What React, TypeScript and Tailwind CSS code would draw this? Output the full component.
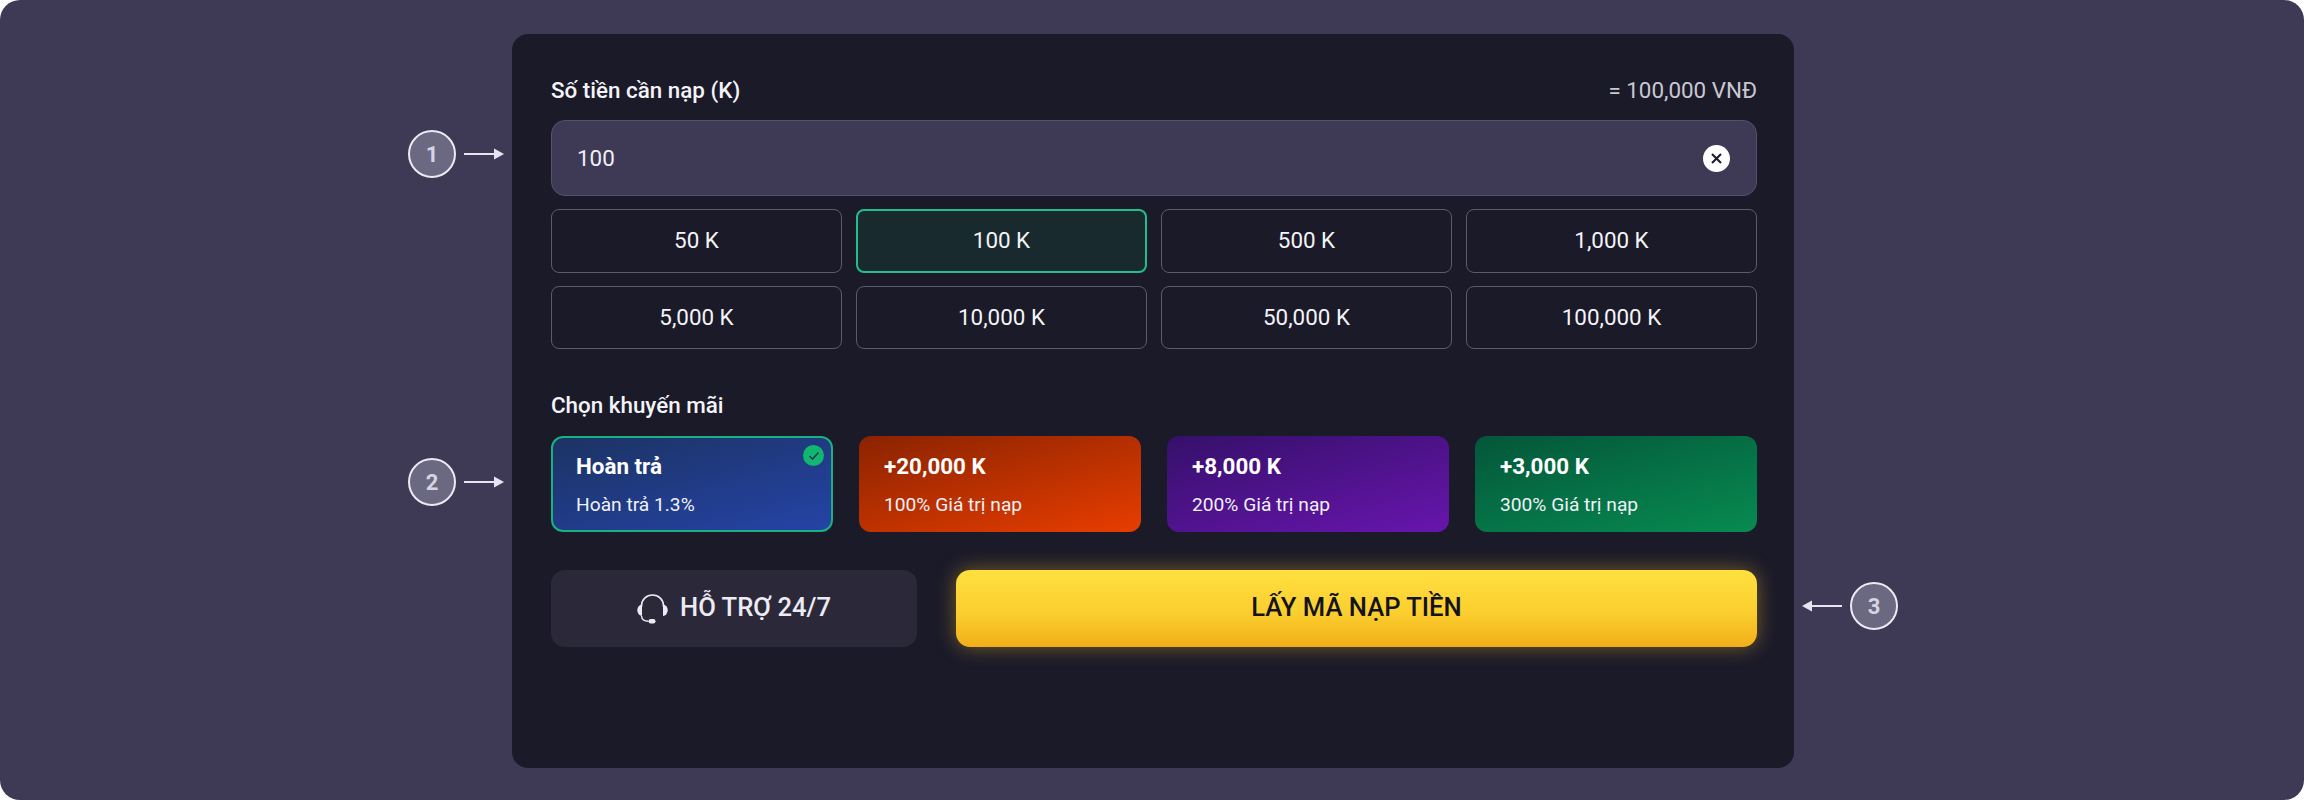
const amounts = ["50 K", "100 K", "500 K", "1,000 K", "5,000 K", "10,000 K", "50,000 K", "100,000 K"];

const promos = [
  { title: "Hoàn trả", sub: "Hoàn trả 1.3%", bg: "bg-[linear-gradient(165deg,#1c3363_0%,#2543a6_100%)]", active: true },
  { title: "+20,000 K", sub: "100% Giá trị nạp", bg: "bg-[linear-gradient(165deg,#8a2300_0%,#e83d00_100%)]", active: false },
  { title: "+8,000 K", sub: "200% Giá trị nạp", bg: "bg-[linear-gradient(165deg,#35106a_0%,#6815ad_100%)]", active: false },
  { title: "+3,000 K", sub: "300% Giá trị nạp", bg: "bg-[linear-gradient(165deg,#04563a_0%,#078b50_100%)]", active: false },
];

function Arrow({ flip }: { flip?: boolean }) {
  return (
    <svg width="40" height="12" viewBox="0 0 40 12" className={flip ? "rotate-180" : ""}>
      <path d="M0 6h32" stroke="#e6e4f0" strokeWidth="2" />
      <path d="M30 0.5 40 6l-10 5.5z" fill="#e6e4f0" />
    </svg>
  );
}

function Badge({ n }: { n: number }) {
  return (
    <div className="flex h-[48px] w-[48px] items-center justify-center rounded-full border-2 border-[#ebeaf2] bg-[#6b6881] text-[22px] font-bold text-[#d6d4e2]">
      {n}
    </div>
  );
}

function Headset() {
  return (
    <svg width="31" height="30" viewBox="0 0 31 30" fill="none">
      <path d="M4.5 13V11.5a11 10.5 0 0 1 22 0V13" stroke="#ecebf3" strokeWidth="1.6" />
      <path d="M5 10.5v11.5a4.5 5.5 0 0 1 0-11.5z" fill="#ecebf3" />
      <path d="M26 10.5v11.5a4.5 5.5 0 0 0 0-11.5z" fill="#ecebf3" />
      <path d="M4.5 22c.3 3.5 3 5.3 7 5.3" stroke="#ecebf3" strokeWidth="1.4" />
      <rect x="11.5" y="25" width="7" height="4.5" rx="2.2" fill="#ecebf3" />
    </svg>
  );
}

export default function App() {
  return (
    <div className="h-[800px] bg-white font-['Roboto',sans-serif]">
      <div className="relative flex h-[800px] justify-center rounded-[20px] bg-[#3e3a56] pl-[2px] pt-[34px]">
        {/* Callouts */}
        <div className="absolute left-[408px] top-[130px] flex items-center gap-[8px]">
          <Badge n={1} />
          <Arrow />
        </div>
        <div className="absolute left-[408px] top-[458px] flex items-center gap-[8px]">
          <Badge n={2} />
          <Arrow />
        </div>
        <div className="absolute left-[1802px] top-[582px] flex items-center gap-[8px]">
          <Arrow flip />
          <Badge n={3} />
        </div>

        <div className="h-[734px] w-[1282px] rounded-[16px] bg-[#1b1a29] pl-[39px] pr-[37px] pt-[44px]">
          <div className="flex h-[26px] items-center justify-between">
            <span className="text-[22.4px] font-medium text-[#f4f4f8]">Số tiền cần nạp (K)</span>
            <span className="text-[22.4px] text-[#c9c8d2]">= 100,000 VNĐ</span>
          </div>

          <div className="mt-[16px] flex h-[76px] items-center justify-between rounded-[14px] border border-[#55516c] bg-[#3e3a56] pl-[25px] pr-[26px]">
            <span className="pt-[1px] text-[22.4px] text-[#f0eff5]">100</span>
            <span className="flex h-[27px] w-[27px] items-center justify-center rounded-full bg-white">
              <svg width="13" height="13" viewBox="0 0 13 13">
                <path d="M2 2l9 9M11 2l-9 9" stroke="#1b1a29" strokeWidth="2" />
              </svg>
            </span>
          </div>

          <div className="mt-[13px] grid grid-cols-4 gap-x-[14px] gap-y-[13px]">
            {amounts.map((a, i) => (
              <div
                key={a}
                className={`flex h-[63.5px] items-center justify-center rounded-[8px] pt-[1px] text-[22.4px] text-[#f4f4f8] ${
                  i === 1 ? "border-2 border-[#22bd8c] bg-[#182a2e]" : "border border-[#5c5b6e] bg-[#1b1a29]"
                }`}
              >
                {a}
              </div>
            ))}
          </div>

          <div className="mt-[44px] flex h-[26px] items-center text-[22.4px] font-medium text-[#f4f4f8]">Chọn khuyến mãi</div>

          <div className="mt-[17px] grid grid-cols-4 gap-x-[26px]">
            {promos.map((p) => (
              <div
                key={p.title}
                className={`relative flex h-[96px] flex-col rounded-[12px] ${p.bg} ${
                  p.active ? "border-2 border-[#17b184] pl-[23px] pt-[15px]" : "pl-[25px] pt-[17px]"
                }`}
              >
                <span className="text-[22.4px] font-bold leading-[26px] text-white">{p.title}</span>
                <span className="mt-[13px] text-[19.2px] leading-[26px] text-[#f0f1f8]">{p.sub}</span>
                {p.active && (
                  <span className="absolute right-[7px] top-[7px] flex h-[21px] w-[21px] items-center justify-center rounded-full bg-[#12b76f]">
                    <svg width="12" height="10" viewBox="0 0 12 10" fill="none">
                      <path d="M1.5 5l3 3 6-6.5" stroke="#1c3a5e" strokeWidth="1.6" />
                    </svg>
                  </span>
                )}
              </div>
            ))}
          </div>

          <div className="mt-[38px] flex gap-[39px]">
            <div className="flex h-[77px] w-[366px] items-center justify-center gap-[12px] rounded-[14px] bg-[#2b2939] text-[25.6px] font-medium text-[#ecebf3]">
              <Headset />
              <span className="pb-[2px]">HỖ TRỢ 24/7</span>
            </div>
            <div className="flex h-[77px] flex-1 items-center justify-center rounded-[14px] bg-[linear-gradient(180deg,#ffe03f_0%,#fbcf30_55%,#f2ae18_100%)] pb-[2px] text-[25.6px] font-medium text-[#14131c] shadow-[0_0_20px_rgba(255,200,40,0.4)]">
              LẤY MÃ NẠP TIỀN
            </div>
          </div>
        </div>
      </div>
    </div>
  );
}
